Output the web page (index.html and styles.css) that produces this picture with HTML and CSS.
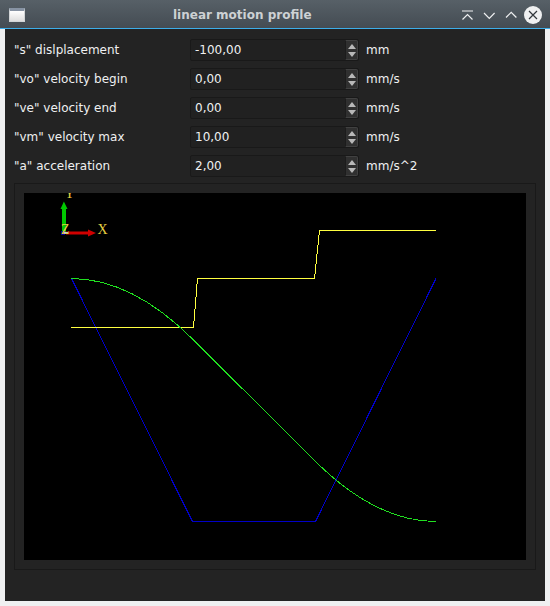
FILE: index.html
```html
<!DOCTYPE html>
<html lang="en">
<head>
<meta charset="utf-8">
<title>linear motion profile</title>
<link rel="stylesheet" href="styles.css">
</head>
<body>
<div class="window">
  <header class="titlebar">
    <span class="app-icon"></span>
    <h1 class="title">linear motion profile</h1>
    <svg class="controls" width="86" height="20" viewBox="0 0 86 20">
      <g fill="none" stroke="#eff0f1" stroke-width="1.2">
        <path d="M2 6H13M2.500 14.500L7.500 9.500L12.500 14.500"/>
        <path d="M24 8L29.300 13.300L34.600 8"/>
        <path d="M46 12.500L51.200 7.300L56.400 12.500"/>
      </g>
      <circle cx="73" cy="10" r="9" fill="#eff0f1"/>
      <path d="M69 6L77 14M77 6L69 14" fill="none" stroke="#31363b" stroke-width="1.200"/>
    </svg>
  </header>
  <main class="content">
    <div class="form">
      <div class="row"><span class="label">"s" dislplacement</span><div class="spin"><span class="value">-100,00</span><span class="steps"><i class="up"></i><i class="down"></i></span></div><span class="unit">mm</span></div>
      <div class="row"><span class="label">"vo" velocity begin</span><div class="spin"><span class="value">0,00</span><span class="steps"><i class="up"></i><i class="down"></i></span></div><span class="unit">mm/s</span></div>
      <div class="row"><span class="label">"ve" velocity end</span><div class="spin"><span class="value">0,00</span><span class="steps"><i class="up"></i><i class="down"></i></span></div><span class="unit">mm/s</span></div>
      <div class="row"><span class="label">"vm" velocity max</span><div class="spin"><span class="value">10,00</span><span class="steps"><i class="up"></i><i class="down"></i></span></div><span class="unit">mm/s</span></div>
      <div class="row"><span class="label">"a" acceleration</span><div class="spin"><span class="value">2,00</span><span class="steps"><i class="up"></i><i class="down"></i></span></div><span class="unit">mm/s^2</span></div>
    </div>
    <div class="frame">
      <svg class="plot" width="502" height="367" viewBox="24 193 502 367">
        <g fill="none" shape-rendering="crispEdges">
          <path stroke="#0000c8" d="M71.500 278.500L192.500 521.500H315.500L436 278.500"/>
          <path stroke="#ffff40" d="M71 327.500H193.500L197.500 278.500H314.500L319.500 230.500H436"/>
          <path stroke="#20e020" d="M71 278.500Q132 278.500 193 339.500L315 461Q376 521.500 436 521.500"/>
        </g>
        <path fill="#00c800" d="M62 233V209H60.500L63.900 201.500L67.500 209H66V233Z"/>
        <path fill="#d00000" d="M66 231.500H88V229.500L96 232.900L88 236.500V234.500H66Z"/>
        <path fill="#0000a0" d="M61 231H65V235H61Z"/>
        <path fill="#c8c8d8" d="M64 232H68V234H64Z"/>
        <g class="axis-text">
          <text x="64.500" y="198">Y</text>
          <text x="61" y="233.500">Z</text>
          <text x="97.500" y="234">X</text>
        </g>
      </svg>
    </div>
  </main>
</div>
</body>
</html>
```
FILE: styles.css
```css
* { box-sizing: border-box; }
body {
  margin: 0;
  background: #eff0f1;
  font: 12px/20px "DejaVu Sans", sans-serif;
  color: #eff0f1;
}
.window { width: 550px; height: 606px; background: #eff0f1; }
.titlebar {
  display: flex;
  align-items: center;
  height: 29px;
  padding: 2px 4px 0 9px;
  background: linear-gradient(#576067, #444c53);
  border-bottom: 1px solid #3daee9;
}
.app-icon {
  width: 16px;
  height: 14px;
  border: 1px solid #d2d5d7;
  border-top: 3px solid #8793a3;
  background: linear-gradient(#fff, #dedede);
}
.title {
  flex: 1;
  margin: 0 0 0 148px;
  font-size: 12px;
  line-height: 20px;
  font-weight: bold;
  color: #cdd1d4;
  white-space: nowrap;
}
.controls { display: block; }
.content {
  width: 540px;
  height: 572px;
  margin: 0 5px;
  padding: 10px 9px 0;
  background: #232323;
}
.form { display: flex; flex-direction: column; gap: 8px; }
.row {
  display: grid;
  grid-template-columns: 176px 169px 1fr;
  height: 21px;
  line-height: 22px;
}
.spin {
  display: flex;
  justify-content: space-between;
  border: 1px solid #191919;
  border-radius: 2px;
  background: #212121;
}
.value { padding-left: 4px; line-height: 20px; }
.steps {
  display: flex;
  flex-direction: column;
  align-items: center;
  justify-content: center;
  gap: 3px;
  width: 13px;
  background: #303030;
  border: 1px solid #414141;
  border-left-color: #1c1c1c;
  border-radius: 0 2px 2px 0;
}
.up, .down {
  width: 0;
  height: 0;
  border-left: 4px solid transparent;
  border-right: 4px solid transparent;
}
.up { border-bottom: 5px solid #b8b8b8; }
.down { border-top: 5px solid #b8b8b8; }
.unit { padding-left: 7px; }
.frame {
  width: 522px;
  height: 387px;
  margin-top: 7px;
  padding: 9px;
  border: 1px solid #191919;
}
.plot { display: block; background: #000; }
.axis-text {
  font: 14px "Liberation Serif", serif;
  fill: #e6d040;
}
```
